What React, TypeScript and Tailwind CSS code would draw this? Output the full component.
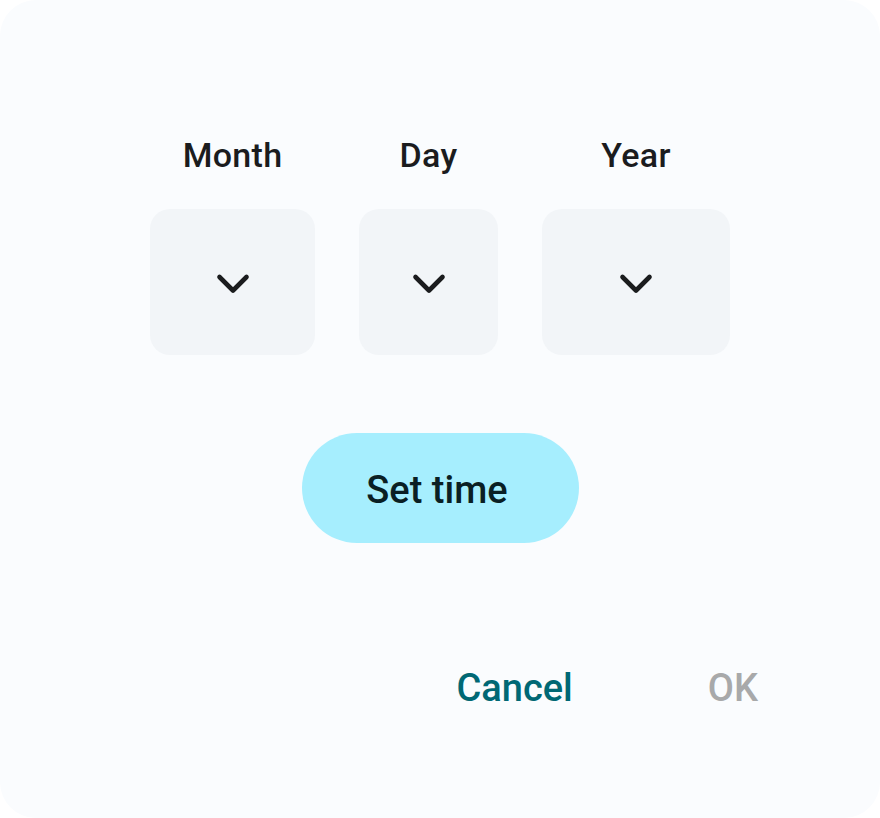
import React from "react";

function Chevron() {
  return (
    <svg width="40" height="30" viewBox="0 0 40 30" fill="none" aria-hidden="true">
      <polyline
        points="6.5,8 20,21.5 33.5,8"
        stroke="#1b1c1e"
        strokeWidth="4.6"
        strokeLinecap="round"
        strokeLinejoin="round"
      />
    </svg>
  );
}

function Field({ label, width }: { label: string; width: string }) {
  return (
    <div className="flex flex-col items-center">
      <div className="text-[34px] leading-[40px] font-medium text-[#1b1c1e] tracking-[0.3px]">{label}</div>
      <div className={`${width} mt-[33px] h-[146px] rounded-[20px] bg-[#f2f5f8] flex items-center justify-center`}>
        <div className="mt-[3px]">
          <Chevron />
        </div>
      </div>
    </div>
  );
}

export default function App() {
  return (
    <div className="w-[880px] h-[818px] bg-white" style={{ fontFamily: "Roboto, 'Noto Sans', sans-serif" }}>
      <div className="w-[880px] h-[818px] rounded-[36px] bg-[#fafcfe] flex flex-col items-center pt-[135px]">
        <div className="flex gap-[44px]">
          <div className="flex flex-col items-center">
            <div className="text-[34px] leading-[40px] font-medium text-[#1b1c1e] tracking-[0.3px]">Month</div>
            <div className="w-[165px] mt-[34px] h-[146px] rounded-[20px] bg-[#f2f5f8] flex items-center justify-center">
              <div className="mt-[3px]"><Chevron /></div>
            </div>
          </div>
          <div className="flex flex-col items-center">
            <div className="text-[34px] leading-[40px] font-medium text-[#1b1c1e] tracking-[0.3px]">Day</div>
            <div className="w-[139px] mt-[34px] h-[146px] rounded-[20px] bg-[#f2f5f8] flex items-center justify-center">
              <div className="mt-[3px]"><Chevron /></div>
            </div>
          </div>
          <div className="flex flex-col items-center">
            <div className="text-[34px] leading-[40px] font-medium text-[#1b1c1e] tracking-[0.3px]">Year</div>
            <div className="w-[188px] mt-[34px] h-[146px] rounded-[20px] bg-[#f2f5f8] flex items-center justify-center">
              <div className="mt-[3px]"><Chevron /></div>
            </div>
          </div>
        </div>
        <button className="mt-[78px] w-[277px] h-[110px] rounded-full bg-[#a6eefe] flex items-center justify-center pt-[4px] pr-[6px]">
          <span className="text-[38px] leading-[44px] font-medium text-[#0a1f24]">Set time</span>
        </button>
        <div className="mt-[123px] w-full flex justify-end pr-[122px] gap-[135px]">
          <span className="text-[38px] leading-[44px] font-medium text-[#006874]">Cancel</span>
          <span className="text-[38px] leading-[44px] font-medium text-[#a8a9aa]">OK</span>
        </div>
      </div>
    </div>
  );
}
